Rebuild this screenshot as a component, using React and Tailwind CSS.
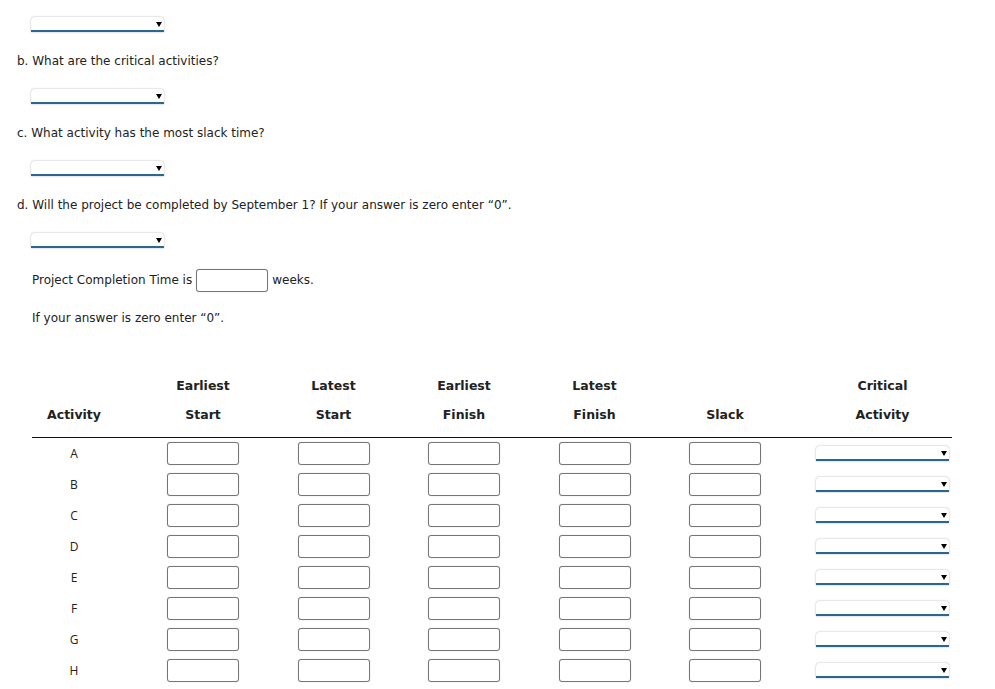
import React from "react";

const font = { fontFamily: '"DejaVu Sans", Verdana, sans-serif' };

function Dropdown({ className = "" }) {
  return (
    <div className={"relative w-[133px] h-[15px] " + className}>
      <div className="absolute inset-0 bg-white rounded-t-[4px] shadow-[0_0_2px_0_rgba(0,0,0,0.35)] border-b-2 border-[#2b6592]" />
      <div className="absolute right-[2px] top-[5px] w-0 h-0 border-l-[3.5px] border-r-[3.5px] border-t-[5px] border-l-transparent border-r-transparent border-t-black" />
    </div>
  );
}

function Input({ className = "" }) {
  return (
    <div className={"w-[72px] h-[23px] bg-white border border-[#767676] rounded-[3px] shadow-[0_0_1px_0_rgba(0,0,0,0.3)] " + className} />
  );
}

const rows = ["A", "B", "C", "D", "E", "F", "G", "H"];
const cols = "grid grid-cols-[84px_22px_130px_131px_130px_131px_130px_162px]";

export default function App() {
  return (
    <div className="w-[995px] h-[689px] bg-white text-[#222] text-[12px] overflow-hidden relative" style={font}>
      <div className="pl-[31px] pt-[17px]">
        <Dropdown />
      </div>
      <div className="pl-[17px] mt-[22px] leading-[15px]">b. What are the critical activities?</div>
      <div className="pl-[31px] mt-[20px]">
        <Dropdown />
      </div>
      <div className="pl-[17px] mt-[22px] leading-[15px]">c. What activity has the most slack time?</div>
      <div className="pl-[31px] mt-[20px]">
        <Dropdown />
      </div>
      <div className="pl-[17px] mt-[22px] leading-[15px]">d. Will the project be completed by September 1? If your answer is zero enter “0”.</div>
      <div className="pl-[31px] mt-[20px]">
        <Dropdown />
      </div>
      <div className="pl-[32px] mt-[21px] flex items-center h-[22px]">
        <span>Project Completion Time is</span>
        <Input className="ml-[4px] mr-[4px] h-[22px]" />
        <span>weeks.</span>
      </div>
      <div className="pl-[32px] mt-[20px] leading-[15px]">If your answer is zero enter “0”.</div>

      <div className="ml-[32px] mt-[52px] w-[920px]">
        <div className={cols + " font-bold text-[12.5px]"}>
          <div className="col-start-3 text-center leading-[15px]">Earliest</div>
          <div className="text-center leading-[15px]">Latest</div>
          <div className="text-center leading-[15px]">Earliest</div>
          <div className="text-center leading-[15px]">Latest</div>
          <div />
          <div className="pl-[26px]"><div className="w-[133px] text-center leading-[15px]">Critical</div></div>
        </div>
        <div className={cols + " font-bold text-[12.5px] mt-[14px]"}>
          <div className="text-center leading-[15px]">Activity</div>
          <div />
          <div className="text-center leading-[15px]">Start</div>
          <div className="text-center leading-[15px]">Start</div>
          <div className="text-center leading-[15px]">Finish</div>
          <div className="text-center leading-[15px]">Finish</div>
          <div className="text-center leading-[15px]">Slack</div>
          <div className="pl-[26px]"><div className="w-[133px] text-center leading-[15px]">Activity</div></div>
        </div>
        <div className="mt-[15px] h-[1px] bg-[#111]" />
        <div className="pt-[4px] flex flex-col gap-[8px]">
          {rows.map((r) => (
            <div key={r} className={cols + " items-center h-[23px]"}>
              <div className="text-center text-[12px]" style={{ fontFamily: '"Open Sans", "Liberation Sans", sans-serif' }}>{r}</div>
              <div />
              {[0, 1, 2, 3, 4].map((i) => (
                <div key={i} className="flex justify-center"><Input /></div>
              ))}
              <div className="pl-[26px]"><Dropdown /></div>
            </div>
          ))}
        </div>
      </div>
    </div>
  );
}
